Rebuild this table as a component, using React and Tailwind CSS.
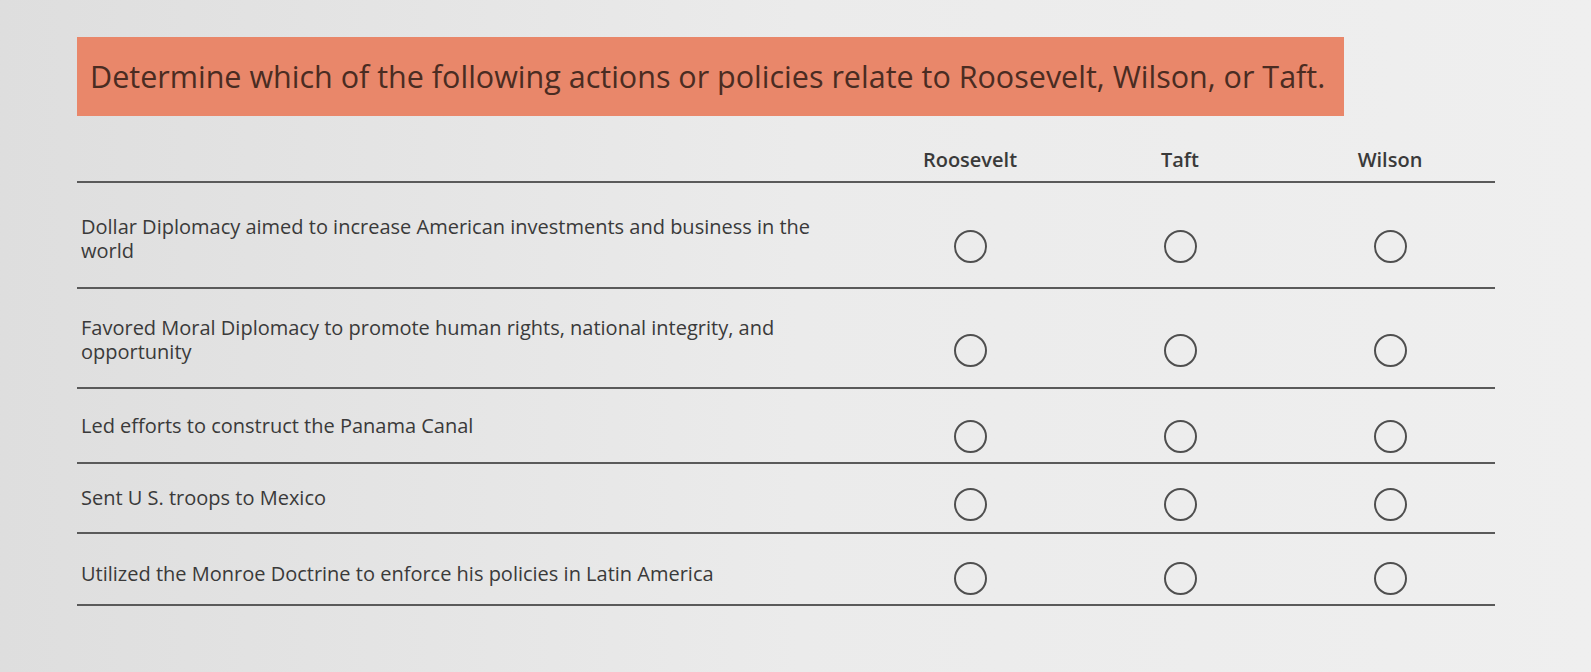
const rows = [
  { text: 'Dollar Diplomacy aimed to increase American investments and business in the world', h: 'h-[106px]', pt: 'pt-[32px]', rp: 'pt-[47px]' },
  { text: 'Favored Moral Diplomacy to promote human rights, national integrity, and opportunity', h: 'h-[100px]', pt: 'pt-[27px]', rp: 'pt-[45px]' },
  { text: 'Led efforts to construct the Panama Canal', h: 'h-[75px]', pt: 'pt-[25px]', rp: 'pt-[31px]' },
  { text: 'Sent U S. troops to Mexico', h: 'h-[70px]', pt: 'pt-[22px]', rp: 'pt-[24px]' },
  { text: 'Utilized the Monroe Doctrine to enforce his policies in Latin America', h: 'h-[72px]', pt: 'pt-[28px]', rp: 'pt-[28px]' },
];

const columns = ['Roosevelt', 'Taft', 'Wilson'];

const Radio = () => (
  <div className="w-[33px] h-[33px] rounded-full border-[2.5px] border-[#4f4f4f]" />
);

export default function App() {
  return (
    <div
      className="w-[1591px] h-[672px] overflow-hidden bg-gradient-to-r from-[#dedede] via-[#ebebeb] to-[#efefef] pt-[37px] pl-[77px]"
      style={{ fontFamily: '"Open Sans", "Liberation Sans", sans-serif' }}
    >
      <div className="w-[1267px] h-[79px] bg-[#e9876a] flex items-center pl-[13px] text-[30.5px] text-[#4a2c22]">
        Determine which of the following actions or policies relate to Roosevelt, Wilson, or Taft.
      </div>

      <div className="w-[1418px] mt-[17px]">
        <div className="flex h-[50px] border-b-2 border-[#5a5a5a] text-[20px] font-semibold text-[#3a3a3a]">
          <div className="w-[788px]" />
          {columns.map((c) => (
            <div key={c} className="w-[210px] flex justify-center pt-[12px]">
              {c}
            </div>
          ))}
        </div>

        {rows.map((r) => (
          <div key={r.text} className={`flex ${r.h} border-b-2 border-[#5a5a5a]`}>
            <div className={`w-[788px] pl-[4px] pr-[10px] ${r.pt} text-[20px] leading-[24px] text-[#3a3a3a]`}>
              {r.text}
            </div>
            {columns.map((c) => (
              <div key={c} className={`w-[210px] flex justify-center ${r.rp}`}>
                <Radio />
              </div>
            ))}
          </div>
        ))}
      </div>
    </div>
  );
}
